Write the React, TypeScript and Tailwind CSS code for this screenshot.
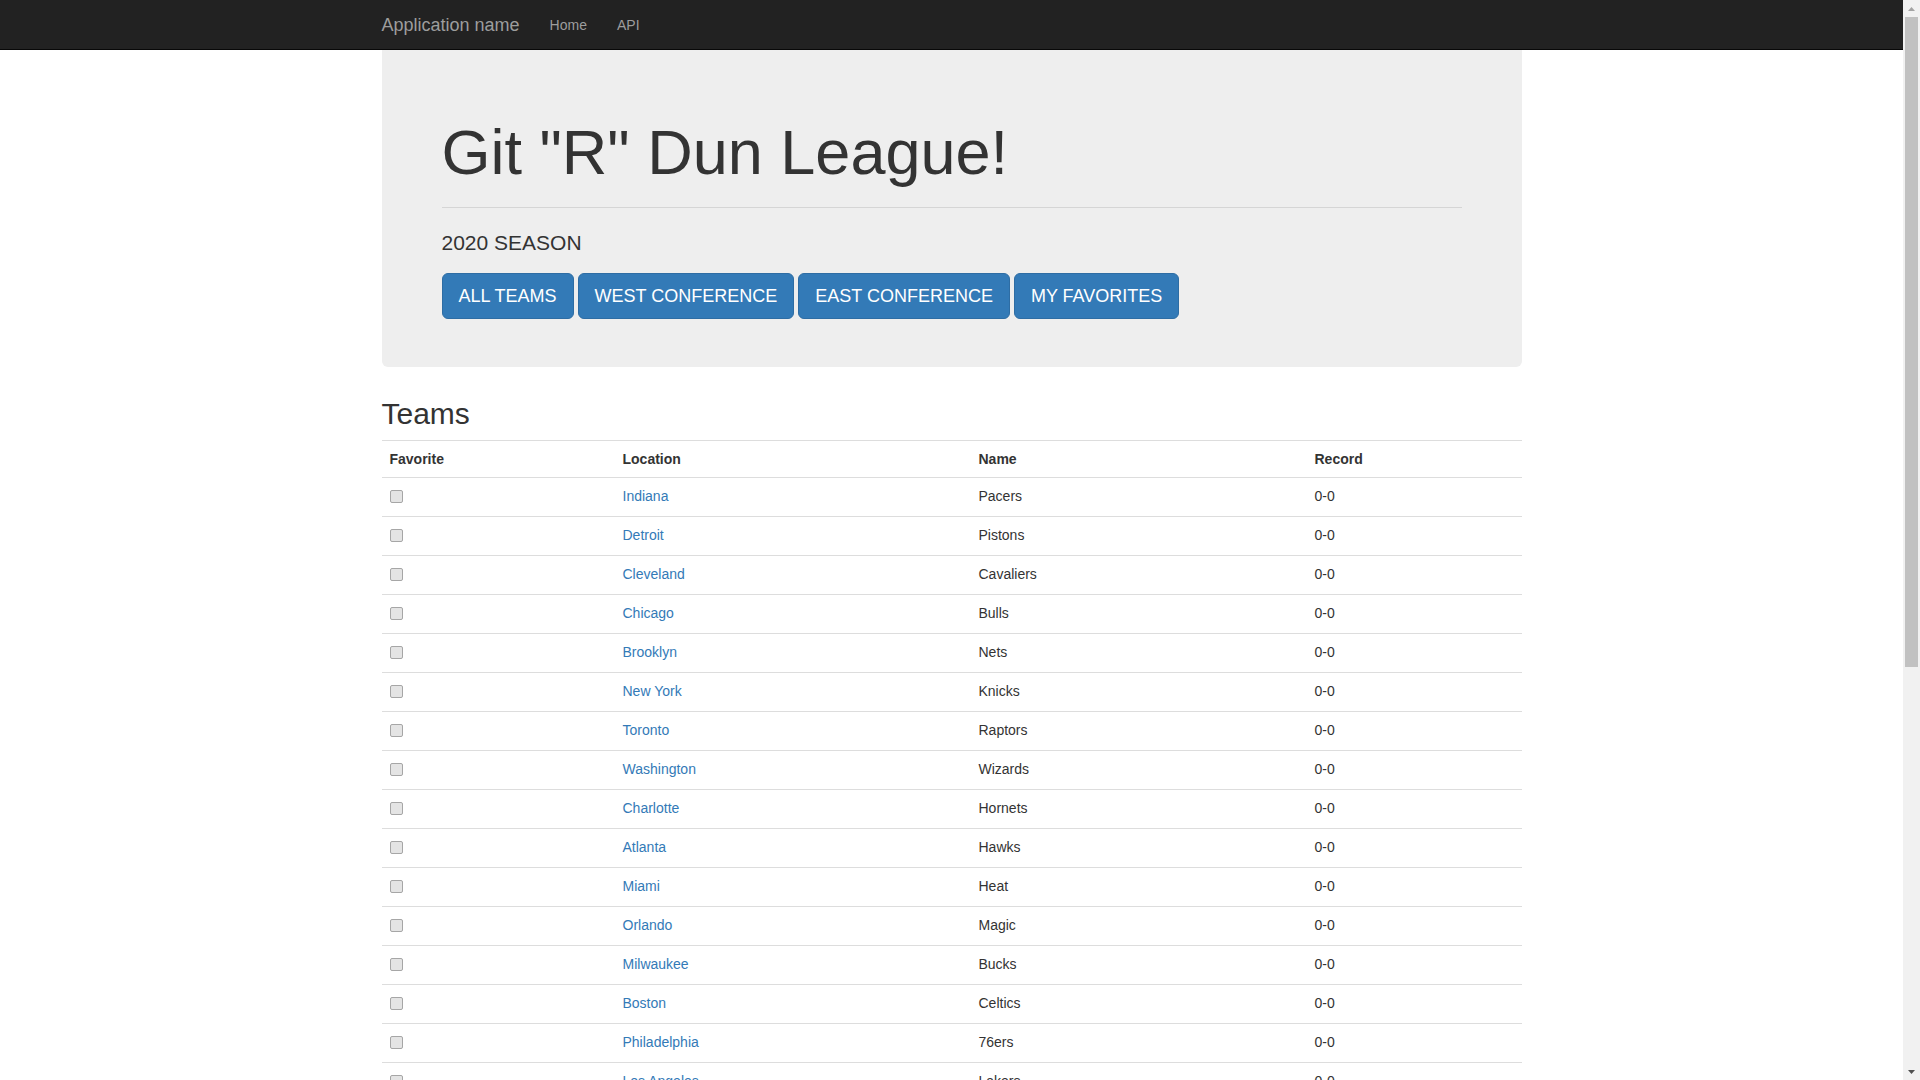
import React from "react";

const teams: [string, string][] = [
  ["Indiana", "Pacers"],
  ["Detroit", "Pistons"],
  ["Cleveland", "Cavaliers"],
  ["Chicago", "Bulls"],
  ["Brooklyn", "Nets"],
  ["New York", "Knicks"],
  ["Toronto", "Raptors"],
  ["Washington", "Wizards"],
  ["Charlotte", "Hornets"],
  ["Atlanta", "Hawks"],
  ["Miami", "Heat"],
  ["Orlando", "Magic"],
  ["Milwaukee", "Bucks"],
  ["Boston", "Celtics"],
  ["Philadelphia", "76ers"],
  ["Los Angeles", "Lakers"],
  ["Los Angeles", "Clippers"],
  ["Golden State", "Warriors"],
  ["Sacramento", "Kings"],
  ["Phoenix", "Suns"],
  ["Denver", "Nuggets"],
  ["Utah", "Jazz"],
  ["Portland", "Trail Blazers"],
  ["Oklahoma City", "Thunder"],
  ["Minnesota", "Timberwolves"],
  ["Dallas", "Mavericks"],
  ["Houston", "Rockets"],
  ["Memphis", "Grizzlies"],
  ["New Orleans", "Pelicans"],
  ["San Antonio", "Spurs"],
];

function Btn({ label, className = "" }: { label: string; className?: string }) {
  return (
    <button
      type="button"
      className={
        "h-[46px] px-[16px] py-[10px] text-[18px] leading-[24px] text-white bg-[#337ab7] border border-[#2e6da4] rounded-[6px] " +
        className
      }
    >
      {label}
    </button>
  );
}

function Scrollbar() {
  return (
    <div className="w-[17px] shrink-0 h-screen bg-[#f1f1f1] flex flex-col items-center">
      <div className="h-[17px] w-full flex items-center justify-center">
        <svg width="7" height="4" viewBox="0 0 7 4">
          <polygon points="3.5,0 7,4 0,4" fill="#a3a3a3" />
        </svg>
      </div>
      <div className="w-[13px] h-[650px] bg-[#c1c1c1]" />
      <div className="flex-1" />
      <div className="h-[17px] w-full flex items-center justify-center">
        <svg width="7" height="4" viewBox="0 0 7 4">
          <polygon points="0,0 7,0 3.5,4" fill="#505050" />
        </svg>
      </div>
    </div>
  );
}

export default function App() {
  return (
    <div className="flex h-screen overflow-hidden bg-white font-['Liberation_Sans',Arial,sans-serif] text-[14px] leading-[20px] text-[#333]">
      <div className="flex-1 min-w-0 overflow-hidden">
        <nav className="h-[50px] bg-[#222] border-b border-[#080808]">
          <div className="w-[1170px] mx-auto px-[15px] flex items-start">
            <a className="-ml-[15px] px-[15px] py-[15px] text-[18px] leading-[20px] text-[#9d9d9d]">
              Application name
            </a>
            <a className="px-[15px] py-[15px] leading-[20px] text-[#9d9d9d]">Home</a>
            <a className="px-[15px] py-[15px] leading-[20px] text-[#9d9d9d]">API</a>
          </div>
        </nav>

        <div className="w-[1170px] mx-auto px-[15px]">
          <div className="bg-[#eeeeee] rounded-b-[6px] px-[60px] pt-[48px] pb-[48px] mb-[30px]">
            <h1 className="mt-[20px] mb-[10px] text-[63px] leading-[1.1] font-normal text-[#333]">
              Git "R" Dun League!
            </h1>
            <hr className="mt-[20px] mb-[20px] border-0 border-t border-[#d5d5d5]" />
            <p className="mb-[15px] text-[21px] leading-[30px] font-normal">2020 SEASON</p>
            <div className="flex">
              <Btn label="ALL TEAMS" />
              <Btn label="WEST CONFERENCE" className="ml-[4px]" />
              <Btn label="EAST CONFERENCE" className="ml-[4px]" />
              <Btn label="MY FAVORITES" className="ml-[4px]" />
            </div>
          </div>

          <h2 className="mb-[10px] text-[30px] leading-[33px] font-normal text-[#333]">Teams</h2>

          <table className="w-full border-collapse mb-[20px]">
            <thead>
              <tr>
                <th className="w-[233px] text-left font-bold px-[8px] py-[8px] border-t border-b border-[#dddddd]">
                  Favorite
                </th>
                <th className="w-[356px] text-left font-bold px-[8px] py-[8px] border-t border-b border-[#dddddd]">
                  Location
                </th>
                <th className="w-[336px] text-left font-bold px-[8px] py-[8px] border-t border-b border-[#dddddd]">
                  Name
                </th>
                <th className="text-left font-bold px-[8px] py-[8px] border-t border-b border-[#dddddd]">
                  Record
                </th>
              </tr>
            </thead>
            <tbody>
              {teams.map(([loc, name], i) => (
                <tr key={i} className="border-b border-[#dddddd]">
                  <td className="px-[8px] py-[8px] align-top">
                    <div className="h-[22px] pt-[4px]">
                      <span className="block w-[13px] h-[13px] rounded-[2px] border border-[#a6a6a6] bg-[#e4e4e4]" />
                    </div>
                  </td>
                  <td className="px-[8px] py-[8px] align-top">
                    <div className="h-[22px]">
                      <a className="text-[#337ab7]">{loc}</a>
                    </div>
                  </td>
                  <td className="px-[8px] py-[8px] align-top">
                    <div className="h-[22px]">{name}</div>
                  </td>
                  <td className="px-[8px] py-[8px] align-top">
                    <div className="h-[22px]">0-0</div>
                  </td>
                </tr>
              ))}
            </tbody>
          </table>

          <hr className="mt-[20px] mb-[20px] border-0 border-t border-[#eeeeee]" />
          <footer>
            <p className="mb-[10px]">© 2020 - My ASP.NET Application</p>
          </footer>
        </div>
      </div>
      <Scrollbar />
    </div>
  );
}
